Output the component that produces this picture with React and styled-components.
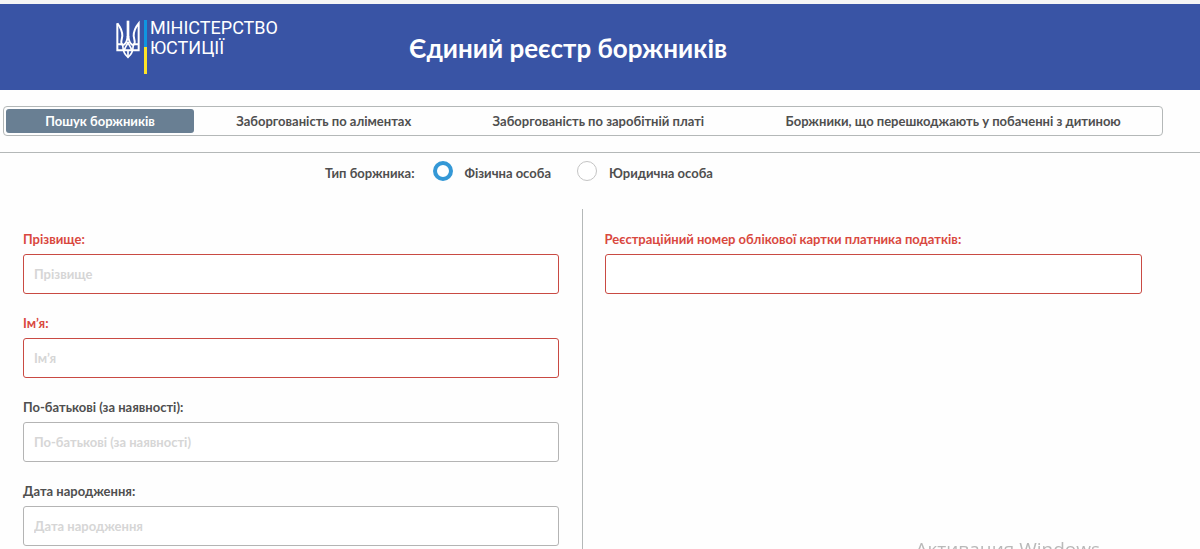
import React from 'react';
import styled, { createGlobalStyle } from 'styled-components';

//Style components

const GlobalStyle = createGlobalStyle`
  * {
    box-sizing: border-box;
  }

  body {
    margin: 0;
    background-color: #fefefe;
    color: #4f4f4f;
    font-family: Lato, 'Open Sans', sans-serif;
    font-size: 13px;
    font-weight: 700;
    line-height: 20px;
  }
`;

const Header = styled.header`
  display: flex;
  align-items: flex-start;
  gap: 132px;
  height: 90px;
  padding: 16px 116px 0;
  border-top: 4px solid #f5f5f5;
  background-color: #3954a5;
  color: white;
`;

const Logo = styled.a`
  display: flex;
  gap: 3px;
  color: inherit;
  text-decoration: none;
`;

const LogoBar = styled.span`
  width: 3px;
  height: 54px;
  background: linear-gradient(#0f95e0 50%, #fde428 50%);
`;

const LogoText = styled.span`
  width: 127px;
  margin-top: -2px;
  font-family: Roboto, sans-serif;
  font-size: 18px;
  font-weight: 400;
  line-height: 20px;
`;

const Title = styled.h1`
  margin: 12px 0 0;
  font-size: 26px;
  font-weight: 700;
  line-height: 32px;
`;

const Tabs = styled.nav`
  display: flex;
  gap: 3px;
  height: 30px;
  margin: 16px 37px 16px 3px;
  padding: 2px;
  border: 1px solid #b4b8b8;
  border-radius: 4px;
`;

const Tab = styled.button`
  flex: 1 1 auto;
  padding: 0;
  border: none;
  border-radius: 3px;
  background-color: ${(props) => (props.$active ? '#697f93' : 'transparent')};
  color: ${(props) => (props.$active ? 'white' : 'inherit')};
  font: inherit;
  white-space: nowrap;
`;

const Form = styled.form`
  border-top: 1px solid #b4b8b8;
`;

const TypeGroup = styled.div`
  display: flex;
  align-items: flex-start;
  gap: 18px;
  padding: 8px 0 0 325px;
  line-height: 24px;
`;

const RadioLabel = styled.label`
  display: flex;
  align-items: flex-start;
  gap: 12px;
  margin-right: 8px;
`;

const Radio = styled.input`
  appearance: none;
  width: 20px;
  height: 20px;
  margin: 0;
  border: 1px solid #c4c4c4;
  border-radius: 50%;
  background-color: white;

  &:checked {
    border: 4px solid #3498d6;
  }
`;

const Columns = styled.div`
  display: grid;
  grid-template-columns: 1fr 1fr;
  margin: 24px 37px 0 0;
`;

const Column = styled.div`
  padding: 20px 23px 0;

  & + & {
    padding: 20px 21px 0 22px;
    border-left: 1px solid #b4b8b8;
  }
`;

const Field = styled.div`
  display: flex;
  flex-direction: column;
  gap: 5px;
  margin-bottom: 19px;
  color: ${(props) => (props.$required ? '#d9483f' : 'inherit')};
`;

const TextInput = styled.input`
  width: 100%;
  height: 40px;
  padding: 0 10px;
  border: 1px solid ${(props) => (props.required ? '#c94a43' : '#b4b4b4')};
  border-radius: 3px;
  background-color: white;
  box-shadow: none;
  color: #4f4f4f;
  font: inherit;

  &::placeholder {
    color: #d6d6d6;
    opacity: 1;
  }
`;

const Watermark = styled.div`
  position: fixed;
  right: 100px;
  bottom: -14px;
  color: #b9b9b9;
  font-family: 'Open Sans', sans-serif;
  font-size: 19px;
  font-weight: 400;
  line-height: 28px;
  pointer-events: none;
`;

const tabs = [
  'Пошук боржників',
  'Заборгованість по аліментах',
  'Заборгованість по заробітній платі',
  'Боржники, що перешкоджають у побаченні з дитиною',
];

const personFields = [
  { id: 'surname', name: 'Прізвище', required: true },
  { id: 'firstname', name: 'Ім’я', required: true },
  { id: 'patronymic', name: 'По-батькові (за наявності)' },
  { id: 'birthdate', name: 'Дата народження' },
];

//React components

const Trident = () => (
  <svg width="25" height="39" viewBox="0 0 75 117" fill="none" stroke="white" strokeWidth="6" aria-hidden="true">
    <path d="M4 10V91H68V10C58 22 53 36 53 48L56 64C57 72 53 76 48 74C41 70 38 60 37 48" />
    <path d="M4 10C14 22 19 36 19 48L16 64C15 72 19 76 24 74C31 70 34 60 35 48" />
    <path d="M36 2V50" strokeWidth="8" />
    <path d="M4 73H20M52 73H68" />
    <path d="M20 74C21 98 28 104 36 112C44 104 51 98 52 74" strokeWidth="5" />
    <path d="M36 66C34 76 27 80 25 91M36 66C38 76 45 80 47 91M36 90V112" strokeWidth="5" />
  </svg>
);

const FormField = ({ id, label, placeholder, required }) => (
  <Field $required={required}>
    <label htmlFor={id}>{label}</label>
    <TextInput id={id} name={id} placeholder={placeholder} required={required} />
  </Field>
);

const App = () => {
  return (
    <>
      <GlobalStyle />
      <Header>
        <Logo href="/">
          <Trident />
          <LogoBar />
          <LogoText>
            МІНІСТЕРСТВО
            <br />
            ЮСТИЦІЇ
          </LogoText>
        </Logo>
        <Title>Єдиний реєстр боржників</Title>
      </Header>
      <main>
        <Tabs>
          {tabs.map((tab, index) => (
            <Tab key={tab} type="button" $active={index === 0}>
              {tab}
            </Tab>
          ))}
        </Tabs>
        <Form>
          <TypeGroup role="radiogroup" aria-labelledby="debtor-type">
            <span id="debtor-type">Тип боржника:</span>
            <RadioLabel>
              <Radio type="radio" name="type" value="person" defaultChecked />
              Фізична особа
            </RadioLabel>
            <RadioLabel>
              <Radio type="radio" name="type" value="company" />
              Юридична особа
            </RadioLabel>
          </TypeGroup>
          <Columns>
            <Column>
              {personFields.map((field) => (
                <FormField
                  key={field.id}
                  id={field.id}
                  label={`${field.name}:`}
                  placeholder={field.name}
                  required={field.required}
                />
              ))}
            </Column>
            <Column>
              <FormField
                id="taxnumber"
                label="Реєстраційний номер облікової картки платника податків:"
                required
              />
            </Column>
          </Columns>
        </Form>
      </main>
      <Watermark>Активация Windows</Watermark>
    </>
  );
};

export default App;
